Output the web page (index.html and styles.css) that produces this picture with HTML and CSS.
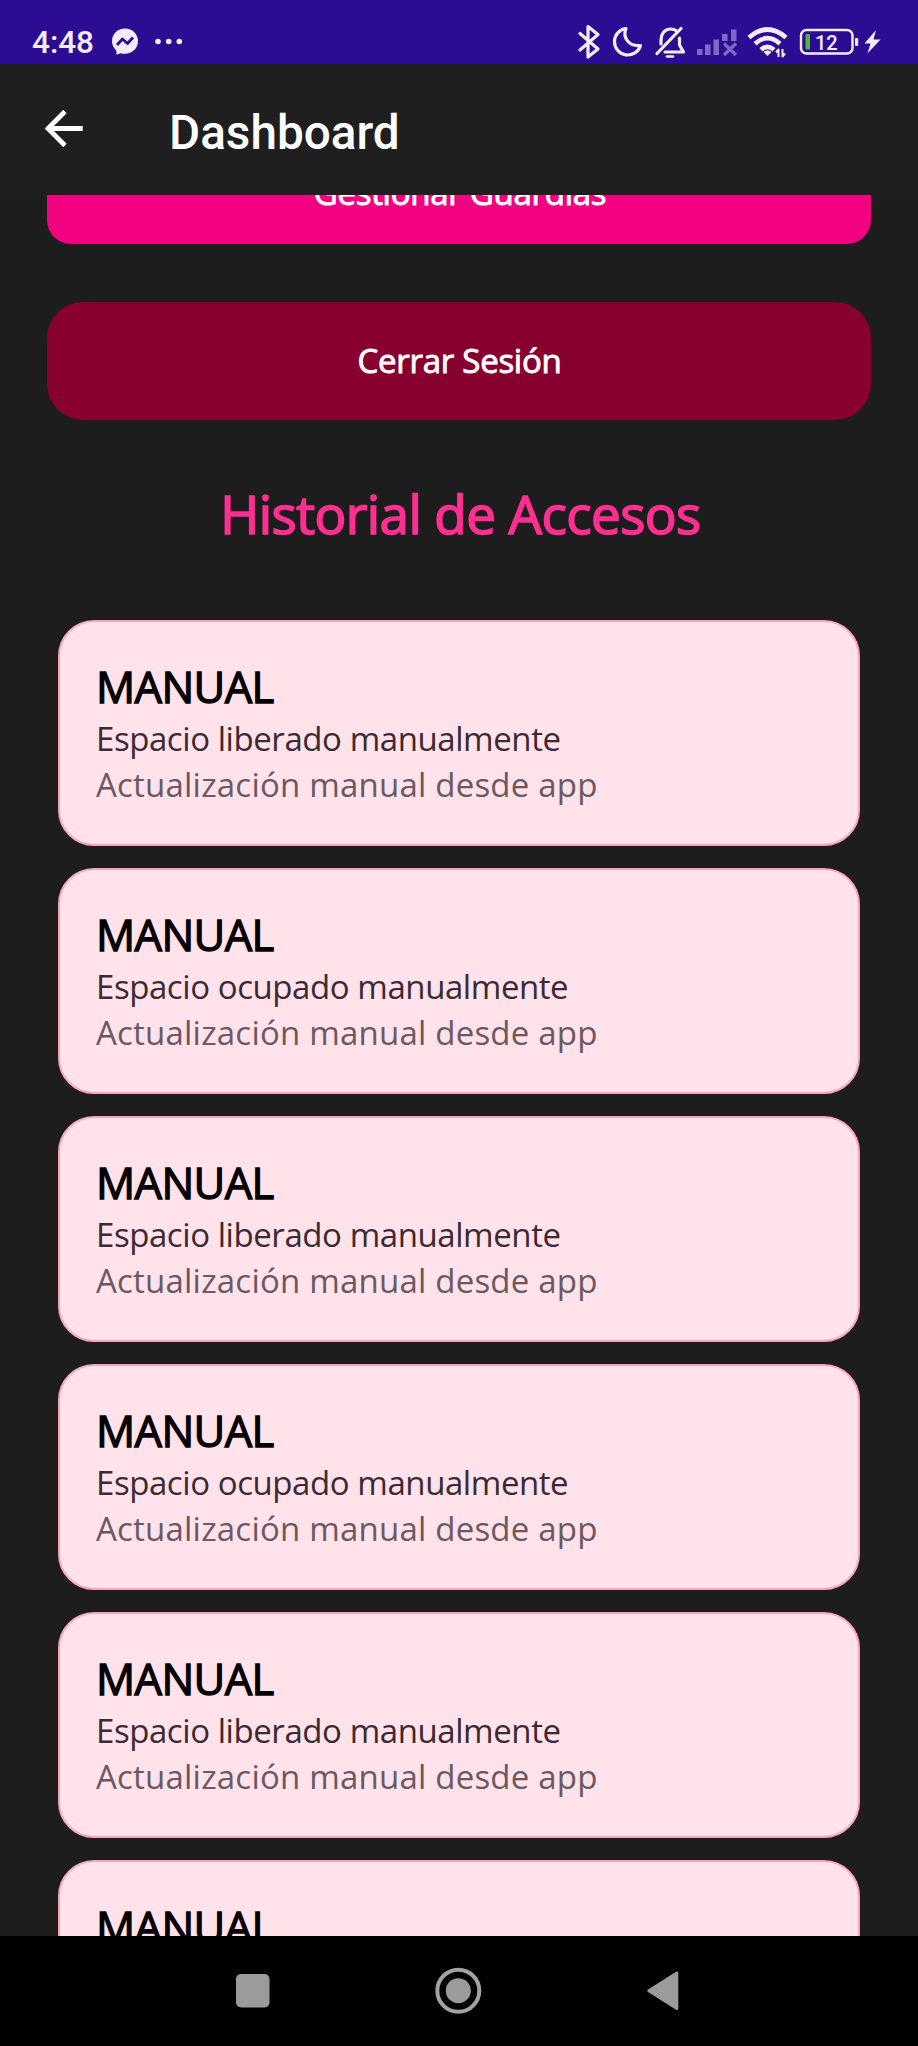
FILE: index.html
```html
<!DOCTYPE html>
<html lang="es">
<head>
<meta charset="utf-8">
<title>Dashboard</title>
<link rel="stylesheet" href="styles.css">
</head>
<body>
<div class="screen">
  <header class="status">
    <span class="clock">4:48</span>
    <svg class="notif" width="88" height="64" viewBox="100 0 88 64">
      <path fill="#f3ecff" d="M125 28.500c-7.500 0-13 5.500-13 12.600 0 3.900 1.600 7.200 4.300 9.500l.3 4.200 4-1.600c1.400.4 2.900.6 4.400.6 7.500 0 13-5.600 13-12.700S132.500 28.500 125 28.500z"/>
      <path fill="none" stroke="#2d0c94" stroke-width="2.800" stroke-linejoin="round" d="M117 45l5.500-6 5 4.500 5.500-6"/>
      <g fill="#f3ecff"><circle cx="158" cy="41.500" r="2.800"/><circle cx="168.700" cy="41.500" r="2.800"/><circle cx="179.300" cy="41.500" r="2.800"/></g>
    </svg>
    <svg class="system" width="348" height="64" viewBox="570 0 348 64" fill="none" stroke="#f3ecff" stroke-width="3.200" stroke-linejoin="round" stroke-linecap="round">
      <path d="M580 33.500l18 15.500-10 8V26.500l10 8-18 15.500"/>
      <path d="M626 28.500A13.300 13.300 0 1 0 640.500 45.500C630 47 622 38.500 626 28.500z"/>
      <path d="M661 44v-4c0-6 3.500-11 9.500-11 3 0 5 .8 6.800 2.600M679.500 38v7l4 7H665M657 53.500L681 28.500"/>
      <path stroke-width="2.600" d="M667 56.500h6"/>
      <g fill="#8168c7" stroke="none">
        <rect x="697" y="49" width="5.500" height="6"/><rect x="705" y="44.500" width="5.500" height="10.500"/><rect x="713.500" y="39.500" width="5.500" height="15.500"/><rect x="722" y="34" width="5.500" height="7"/><rect x="731" y="29.500" width="5.500" height="11.500"/>
      </g>
      <path stroke="#8168c7" stroke-width="3.200" stroke-linecap="butt" d="M724 43.500l12 11.500M736 43.500L724 55"/>
      <g stroke-width="4.600" stroke-linecap="butt"><path d="M749 37.500Q767.500 21.500 786 37.500"/><path d="M755 43.700Q767.500 32.700 780 43.700"/><path d="M761 49.800Q767.500 43.800 774 49.800"/></g>
      <path fill="#f3ecff" stroke="none" d="M763.500 52q4-3.500 8 0l-4 4z"/>
      <path stroke-width="2" stroke-linecap="butt" d="M778.500 57v-7.500l-2.500 3M782.500 49v7.500l2.500-3"/>
      <rect x="801" y="30" width="51.500" height="23.500" rx="5.500" stroke-width="2.400"/>
      <rect x="805.500" y="34" width="4.500" height="15.500" rx="1" fill="#4fb832" stroke="none"/>
      <rect x="855" y="38" width="3.200" height="8" rx="1" fill="#f3ecff" stroke="none"/>
      <path fill="#f3ecff" stroke="none" d="M876 30l-11.500 13.500h6L867.500 53.500 880.500 39.500h-7z"/>
      <text class="charge" x="815" y="50">12</text>
    </svg>
  </header>
  <nav class="appbar">
    <svg width="39" height="39" viewBox="0 0 39 39" fill="none" stroke="#fff" stroke-width="4.800"><path d="M38.700 19.500H4M21 2.500L4 19.500l17 17"/></svg>
    <h1>Dashboard</h1>
  </nav>
  <main class="content">
    <button class="btn manage"><span>Gestionar Guardias</span></button>
    <button class="btn logout"><span>Cerrar Sesión</span></button>
    <h2><span>Historial de Accesos</span></h2>
    <section class="list">
      <article class="card"><h3>MANUAL</h3><p class="event">Espacio liberado manualmente</p><p class="detail">Actualización manual desde app</p></article>
      <article class="card"><h3>MANUAL</h3><p class="event">Espacio ocupado manualmente</p><p class="detail">Actualización manual desde app</p></article>
      <article class="card"><h3>MANUAL</h3><p class="event">Espacio liberado manualmente</p><p class="detail">Actualización manual desde app</p></article>
      <article class="card"><h3>MANUAL</h3><p class="event">Espacio ocupado manualmente</p><p class="detail">Actualización manual desde app</p></article>
      <article class="card"><h3>MANUAL</h3><p class="event">Espacio liberado manualmente</p><p class="detail">Actualización manual desde app</p></article>
      <article class="card"><h3>MANUAL</h3></article>
    </section>
  </main>
  <footer class="navbar">
    <svg width="918" height="110" viewBox="0 1936 918 110" fill="#9b9b9b">
      <rect x="236" y="1974" width="33.500" height="33.500" rx="5"/>
      <circle cx="458.300" cy="1990.700" r="21" fill="none" stroke="#a3a3a3" stroke-width="4"/>
      <circle cx="458.300" cy="1990.700" r="12.500"/>
      <path d="M648 1989.500L676 1971.800q2.300-1 2.300 1.200v35.500q0 2.200-2.300 1.200L648 1992q-1.500-1.200 0-2.500z"/>
    </svg>
  </footer>
</div>
</body>
</html>
```
FILE: styles.css
```css
* { box-sizing: border-box; margin: 0; padding: 0; }
body { background: #1d1d1d; }
.screen {
  width: 918px;
  height: 2046px;
  display: flex;
  flex-direction: column;
  overflow: hidden;
  font-family: "Open Sans", "Noto Sans", sans-serif;
}
.status {
  height: 64px;
  flex: none;
  display: flex;
  background: #2d0c94;
  color: #f3ecff;
}
.clock {
  width: 100px;
  padding-left: 32px;
  font: 500 31.500px/86px Roboto, sans-serif;
  white-space: nowrap;
}
.system { margin-left: auto; }
.charge {
  font: 500 20px Roboto, sans-serif;
  fill: #f3ecff;
  stroke: none;
}
.appbar {
  height: 131px;
  flex: none;
  display: flex;
  align-items: flex-start;
  padding: 45px 0 0 44px;
  background: #1f1f1f;
  color: #fff;
}
.appbar h1 {
  margin: -3px 0 0 86px;
  font: 500 47.700px/54px Roboto, sans-serif;
}
.content {
  flex: 1;
  min-height: 0;
  overflow: hidden;
  display: flex;
  flex-direction: column;
  padding: 0 47px;
}
.btn {
  flex: none;
  display: flex;
  align-items: center;
  justify-content: center;
  border: 0;
  color: #fff;
  font: 400 33px/44px "Open Sans", sans-serif;
  letter-spacing: -0.27px;
  -webkit-text-stroke: 0.9px #fff;
}
.manage {
  height: 104px;
  margin-top: -55px;
  padding: 2px 0 0 2px;
  border-radius: 24px;
  background: #f20281;
}
.logout {
  height: 118px;
  margin-top: 58px;
  padding-left: 1px;
  border-radius: 36px;
  background: #88002f;
}
.content h2 {
  flex: none;
  margin-top: 54px;
  padding-left: 3px;
  font-size: 53px;
  letter-spacing: -0.600px;
  font-weight: 400;
  line-height: 80px;
  text-align: center;
  color: #ff2f92;
  -webkit-text-stroke: 1.600px #ff2f92;
}
.list {
  display: flex;
  flex-direction: column;
  gap: 22px;
  margin-top: 66px;
  padding: 0 11px;
}
.card {
  flex: none;
  height: 226px;
  padding: 36px 36px 35px;
  border: 2px solid #f7a3bd;
  border-radius: 36px;
  background: #ffe2ea;
  white-space: nowrap;
}
.card h3 {
  margin-bottom: 1px;
  font-size: 43.500px;
  letter-spacing: -0.600px;
  font-weight: 400;
  line-height: 58px;
  color: #050003;
  -webkit-text-stroke: 1.300px #050003;
}
.event { font-size: 33px; line-height: 44px; letter-spacing: -0.430px; color: #3c2a32; }
.detail { font-size: 33px; line-height: 48px; letter-spacing: 0.210px; color: #6b595f; }
.navbar { height: 110px; flex: none; background: #000; }
.navbar svg { display: block; }
```
